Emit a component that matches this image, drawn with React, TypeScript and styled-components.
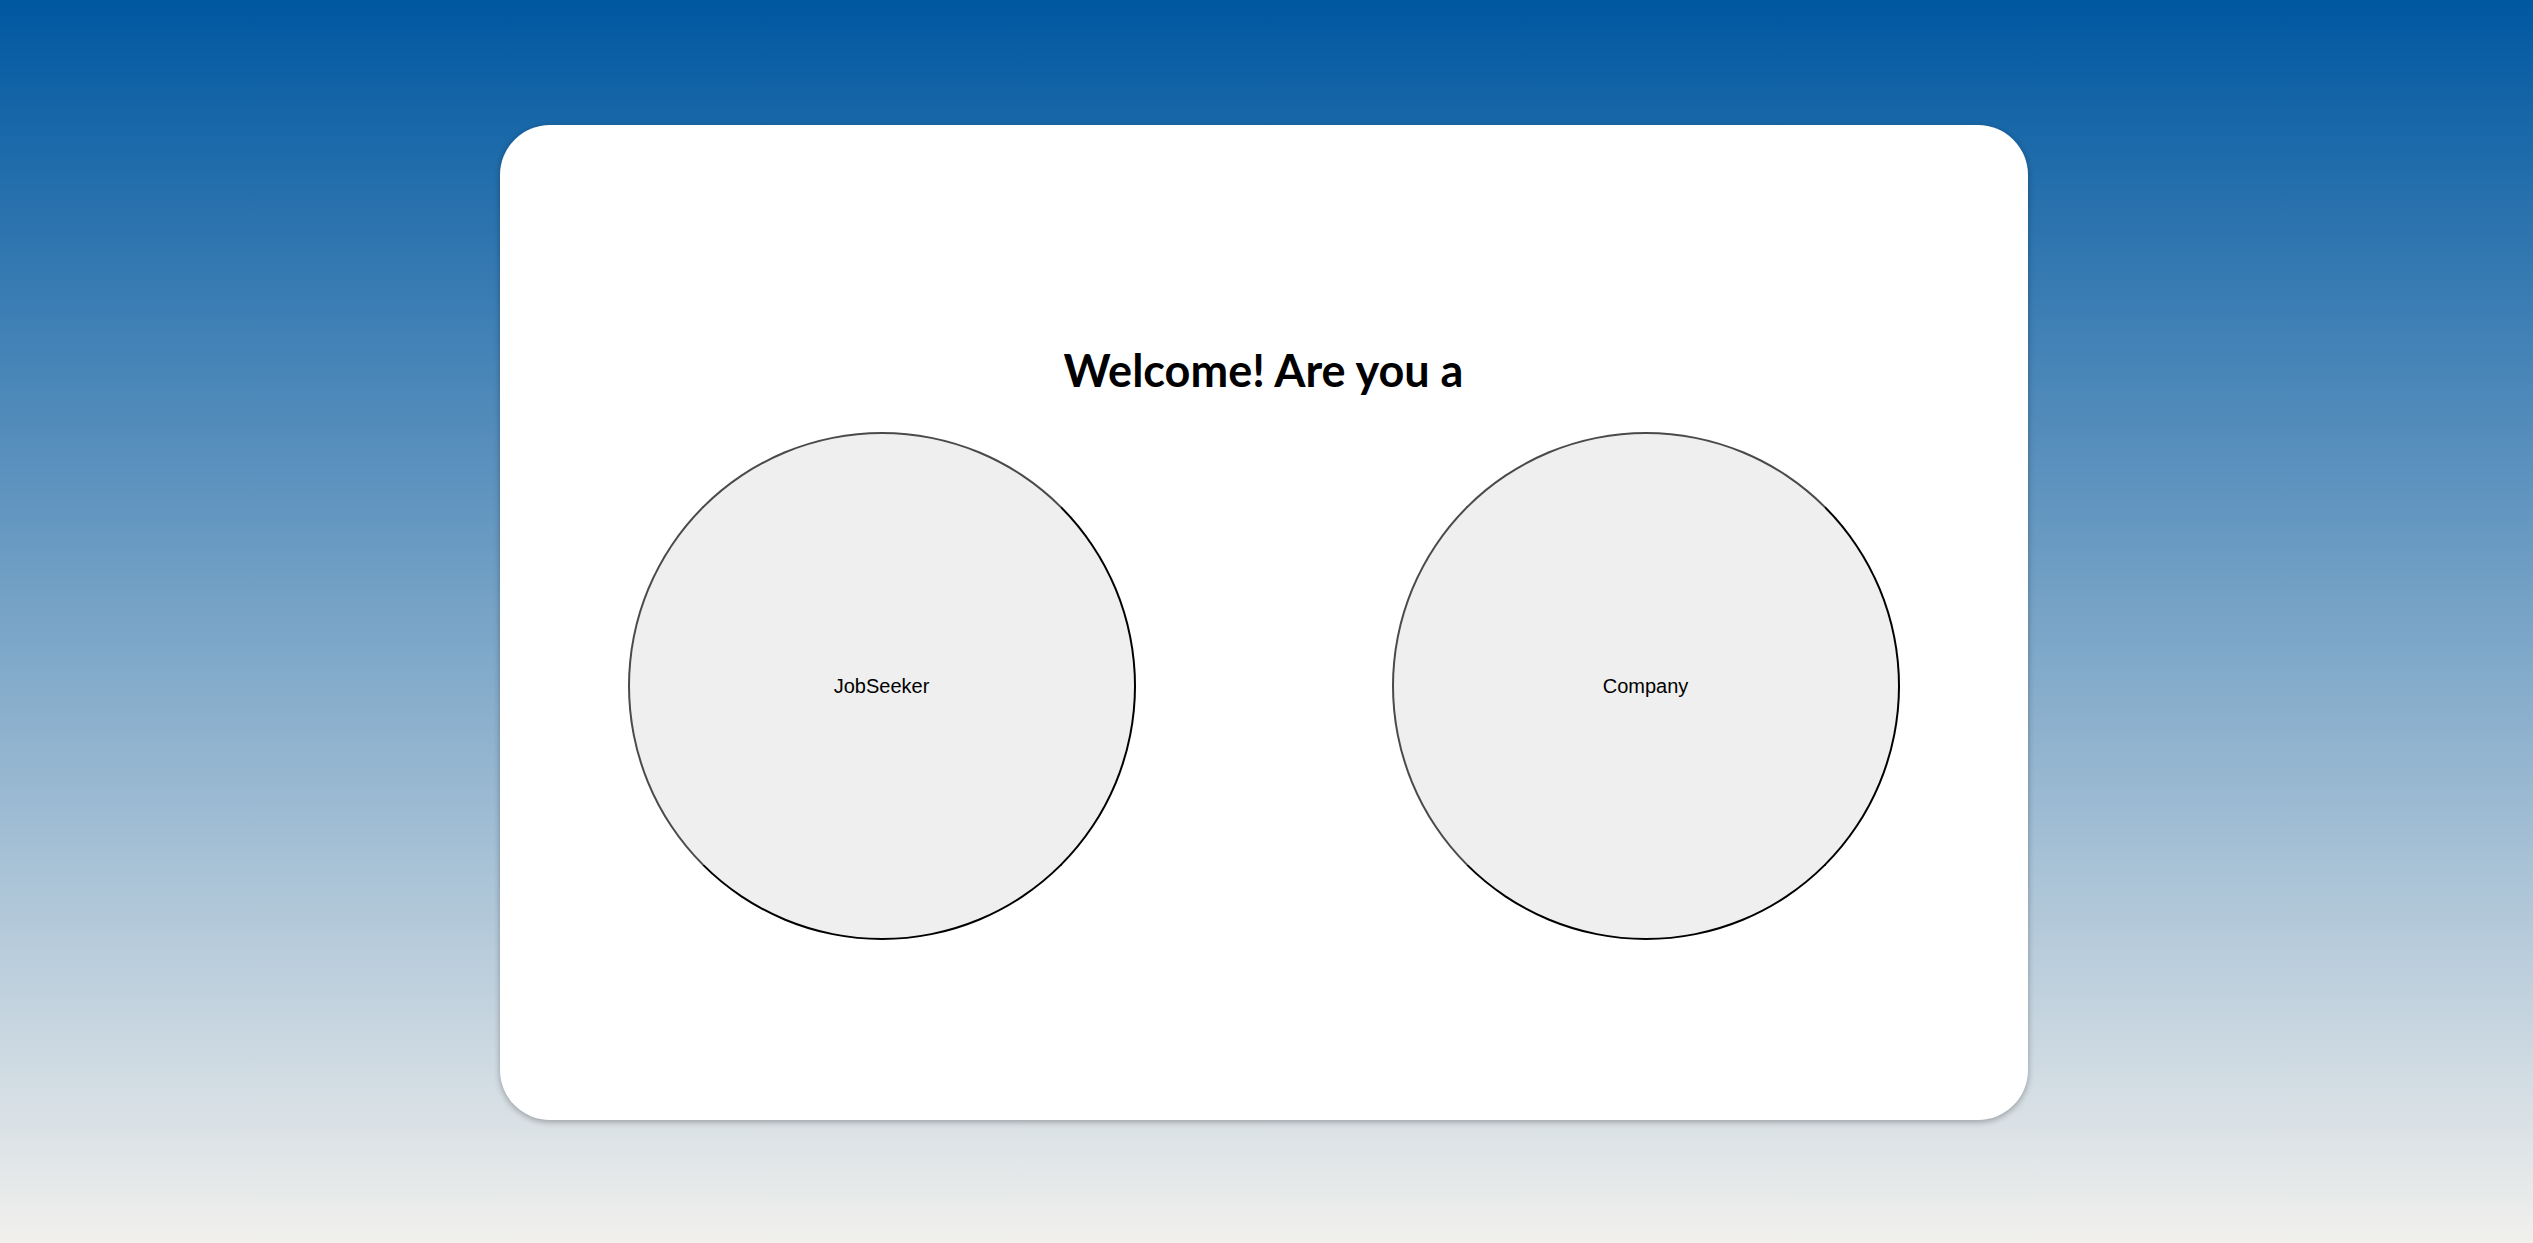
import React from 'react';
import styled, { createGlobalStyle } from 'styled-components';

const GlobalStyle = createGlobalStyle`
  html, body {
    margin: 0;
    padding: 0;
  }
  body {
    font-family: 'Liberation Sans', Arial, sans-serif;
  }
`;

const Page = styled.div`
  min-height: 100vh;
  box-sizing: border-box;
  display: flex;
  align-items: center;
  justify-content: center;
  padding: 2px 6px 0 0;
  background: linear-gradient(to bottom, #0058a1 0%, #f1f0ed 100%);
`;

const Card = styled.div`
  width: 1528px;
  height: 995px;
  box-sizing: border-box;
  background: #fff;
  border-radius: 50px;
  box-shadow: 0 2px 6px rgba(0, 0, 0, 0.3);
  display: flex;
  flex-direction: column;
  align-items: center;
  padding-top: 223px;
`;

const Title = styled.h1`
  margin: 0;
  font-family: Lato, 'Noto Sans', sans-serif;
  font-weight: 700;
  font-size: 45px;
  line-height: 1;
  color: #000;
`;

const ChoiceRow = styled.div`
  align-self: stretch;
  display: flex;
  justify-content: space-around;
  margin-top: 39px;
`;

const ChoiceButton = styled.button`
  width: 508px;
  height: 508px;
  box-sizing: border-box;
  border-radius: 50%;
  border: 2px solid;
  border-color: #4a4a4a #000 #000 #4a4a4a;
  background: #efefef;
  font-family: 'Liberation Sans', Arial, sans-serif;
  font-size: 20px;
  color: #000;
  cursor: pointer;
`;

const App: React.FC = () => {
  return (
    <>
      <GlobalStyle />
      <Page>
        <Card>
          <Title>Welcome! Are you a</Title>
          <ChoiceRow>
            <ChoiceButton type="button">JobSeeker</ChoiceButton>
            <ChoiceButton type="button">Company</ChoiceButton>
          </ChoiceRow>
        </Card>
      </Page>
    </>
  );
};

export default App;
